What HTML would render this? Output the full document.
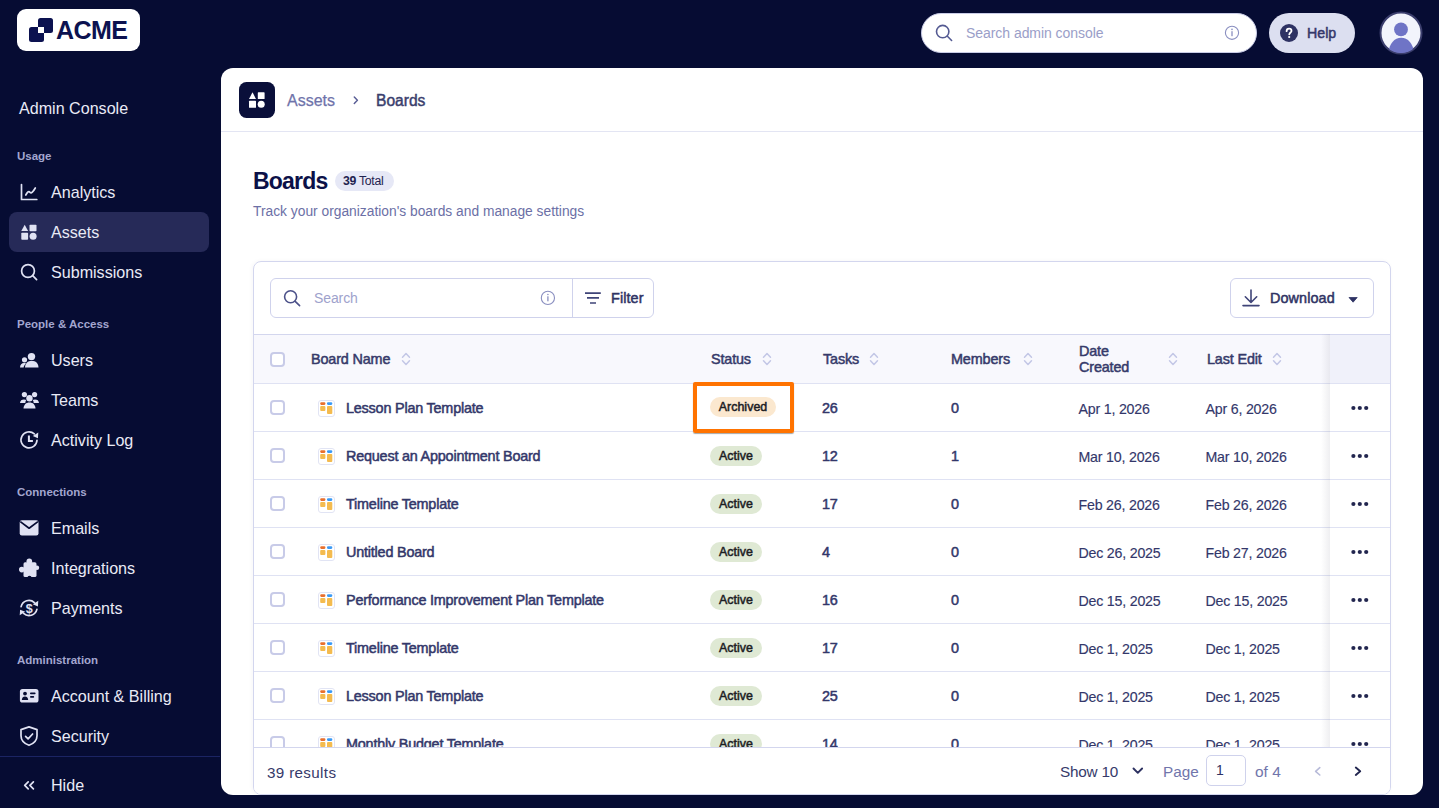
<!DOCTYPE html><html><head><meta charset="utf-8"><style>
*{box-sizing:border-box;margin:0;padding:0}
html,body{width:1439px;height:808px;overflow:hidden}
body{background:#060c33;font-family:"Liberation Sans",sans-serif;position:relative;color:#2d3161}
.abs{position:absolute;white-space:nowrap}
.sb{color:#e9eaf6;font-size:16.1px;line-height:20px}
.sec{color:#a3a6cf;font-size:11.5px;font-weight:bold;line-height:14px}
.card{left:221px;top:68px;width:1202px;height:727px;background:#fff;border-radius:12px;overflow:hidden}
.tcard{left:32px;top:193px;width:1138px;height:534px;border:1px solid #d3d6ee;border-radius:8px;overflow:hidden;box-shadow:-1px 0 4px rgba(20,20,60,0.04)}
.hd{font-size:14.4px;letter-spacing:-0.15px;line-height:20px;color:#363a6a;-webkit-text-stroke:0.5px #363a6a}
.nm{font-size:14.4px;letter-spacing:-0.2px;line-height:20px;color:#33376a;-webkit-text-stroke:0.5px #33376a}
.num{font-size:14.4px;letter-spacing:-0.2px;line-height:20px;color:#33376a;-webkit-text-stroke:0.5px #33376a}
.dt{font-size:14.2px;letter-spacing:-0.2px;line-height:20px;color:#33376a;-webkit-text-stroke:0.15px #33376a}
.badge{height:20px;border-radius:10px;font-size:12.4px;letter-spacing:0.05px;line-height:20px;text-align:center;color:#1d1d24;-webkit-text-stroke:0.5px #1d1d24}
.cb{width:15px;height:15px;border:2px solid #c8cbe8;border-radius:4px;background:#fff}
</style></head><body>
<div class="abs" style="left:17px;top:9px;width:123px;height:42px;background:#fff;border-radius:9px"></div>
<svg class="abs" style="left:29px;top:18px" width="25" height="25" viewBox="0 0 25 25"><rect x="9" y="0" width="15" height="15" rx="2.5" fill="#0c1250"/><rect x="0" y="9" width="15" height="15" rx="2.5" fill="#0c1250"/><rect x="9" y="9" width="6" height="6" fill="#fff"/></svg>
<div class="abs" style="left:56px;top:14px;font-size:25px;font-weight:bold;color:#0c1250;letter-spacing:-0.6px;line-height:32px">ACME</div>
<div class="abs sb" style="left:19px;top:98px">Admin Console</div>
<div class="abs" style="left:9px;top:212px;width:200px;height:40px;background:#262a58;border-radius:8px"></div>
<div class="abs sec" style="left:17px;top:149px">Usage</div>
<div class="abs sec" style="left:17px;top:317px">People &amp; Access</div>
<div class="abs sec" style="left:17px;top:485px">Connections</div>
<div class="abs sec" style="left:17px;top:653px">Administration</div>
<div class="abs sb" style="left:51px;top:182px">Analytics</div>
<div class="abs sb" style="left:51px;top:222px">Assets</div>
<div class="abs sb" style="left:51px;top:262px">Submissions</div>
<div class="abs sb" style="left:51px;top:350px">Users</div>
<div class="abs sb" style="left:51px;top:390px">Teams</div>
<div class="abs sb" style="left:51px;top:430px">Activity Log</div>
<div class="abs sb" style="left:51px;top:518px">Emails</div>
<div class="abs sb" style="left:51px;top:558px">Integrations</div>
<div class="abs sb" style="left:51px;top:598px">Payments</div>
<div class="abs sb" style="left:51px;top:686px">Account &amp; Billing</div>
<div class="abs sb" style="left:51px;top:726px">Security</div>
<div class="abs sb" style="left:51px;top:775px">Hide</div>
<div class="abs" style="left:0;top:756px;width:220px;height:1px;background:#1b2463"></div>
<svg class="abs" style="left:0;top:0" width="220" height="808" viewBox="0 0 220 808">
<g fill="none" stroke="#e0e2f3" stroke-width="1.7" stroke-linecap="round" stroke-linejoin="round">
<path d="M21.5 184.5 V199.5 H36.8"/>
<path d="M25.8 195 C27.3 192.2 28.6 190.8 30 192.3 C31.4 193.8 33 192 35.3 188"/>
<circle cx="28" cy="271" r="6.4"/><path d="M32.7 275.7 L36.6 279.6"/>
<path d="M37 440.3 A8 8 0 1 1 34.3 433.9"/>
<path d="M28.9 435.6 V441 H32.9" stroke-width="2" stroke-linecap="butt" stroke-linejoin="miter"/>
<path d="M29 726.9 L37 729.6 V735.8 C37 740.5 33.8 743.6 29 745.3 C24.2 743.6 21 740.5 21 735.8 V729.6 Z"/>
<path d="M25.6 736.3 L28.1 738.8 L32.6 734"/>
<path d="M28.2 781.8 L24.7 785.3 L28.2 788.8 M33.4 781.8 L29.9 785.3 L33.4 788.8"/>
<path d="M21.1 606.6 A8 8 0 0 1 34.4 602.6"/><path d="M36.9 609.4 A8 8 0 0 1 23.6 613.4"/>
</g>
<g fill="#e0e2f3">
<path d="M21.3 231 L24.7 224.7 L28.1 231 Z"/><rect x="29.5" y="224.7" width="7" height="6.5" rx="0.8"/>
<rect x="21.3" y="232.8" width="6.8" height="7" rx="0.8"/><circle cx="33.1" cy="236.3" r="3.5"/>
<circle cx="31.5" cy="356.6" r="3.7"/><path d="M25 367.5 C25.3 362.8 27.8 361 31.8 361 C35.8 361 38.2 362.8 38.5 367.5 Z"/>
<circle cx="24.5" cy="359.8" r="2.6"/><path d="M20 367.5 C20.2 364.6 21.6 363.2 24 363.1 C24.8 363.1 25.5 363.2 26 363.4 C24.6 364.6 23.8 366 23.6 367.5 Z"/>
<circle cx="24.4" cy="394.6" r="2.6"/><circle cx="34.6" cy="394.6" r="2.6"/><circle cx="29.5" cy="398.3" r="3.2"/>
<path d="M20 403 C20.3 400.6 21.6 399.5 24 399.5 C25 399.5 25.7 399.7 26.2 400.1 C25.6 401 25.3 402 25.3 403 Z"/>
<path d="M39 403 C38.7 400.6 37.4 399.5 35 399.5 C34 399.5 33.3 399.7 32.8 400.1 C33.4 401 33.7 402 33.7 403 Z"/>
<path d="M23.5 408.4 C23.8 404.5 26 402.4 29.5 402.4 C33 402.4 35.2 404.5 35.5 408.4 Z"/>
<rect x="19.7" y="520.3" width="18.8" height="15.2" rx="2.2"/>
<rect x="23.5" y="562.3" width="13" height="14.7" rx="1.6"/><circle cx="29.3" cy="561.2" r="2.8"/><circle cx="21.8" cy="569.6" r="2.8"/><circle cx="37" cy="567.8" r="2.2"/>
<rect x="19.9" y="689" width="18.6" height="13.6" rx="2.6"/>
<path d="M38.3 432.6 L32.8 436.1 L37.9 438.2 Z"/><path d="M38.3 600.8 L32.8 604.3 L37.9 606.4 Z"/><path d="M19.7 615.3 L25.2 611.8 L20.1 609.7 Z"/>
</g>
<path d="M20.3 521.6 L29.1 528.2 L37.9 521.6" fill="none" stroke="#060c33" stroke-width="1.7" stroke-linejoin="round"/>
<circle cx="29.5" cy="577.8" r="2.1" fill="#060c33"/>
<g fill="#060c33"><circle cx="25" cy="693.6" r="1.9"/><path d="M21.8 699.9 C22 697.5 23.2 696.4 25 696.4 C26.8 696.4 28 697.5 28.2 699.9 Z"/>
<rect x="30" y="692.6" width="5.6" height="1.7" rx="0.8"/><rect x="30" y="696.1" width="4.2" height="1.7" rx="0.8"/></g>
<text x="29.2" y="612.6" font-family="Liberation Sans" font-weight="bold" font-size="12.5" fill="#e0e2f3" text-anchor="middle">$</text>
</svg>
<div class="abs" style="left:921px;top:13px;width:336px;height:40px;border-radius:20px;background:#fff;border:1px solid #c9cce6"></div>
<svg class="abs" style="left:930px;top:20px" width="320" height="26" viewBox="930 20 320 26"><g fill="none" stroke="#545a92" stroke-width="1.6" stroke-linecap="round"><circle cx="942.7" cy="31.6" r="6.2"/><path d="M947.4 36.3 L951.6 40.5"/></g><g fill="none" stroke="#8a8fc0" stroke-width="1.1"><circle cx="1232" cy="32.8" r="6.6"/></g><rect x="1231.35" y="31.2" width="1.3" height="5" fill="#8a8fc0"/><circle cx="1232" cy="29.4" r="0.8" fill="#8a8fc0"/></svg>
<div class="abs" style="left:966px;top:23px;font-size:14px;line-height:20px;color:#9a9ec8;letter-spacing:-0.05px">Search admin console</div>
<div class="abs" style="left:1269px;top:13px;width:86px;height:40px;border-radius:20px;background:#dcdff0"></div>
<svg class="abs" style="left:1280px;top:24px" width="18" height="18" viewBox="0 0 18 18"><circle cx="9" cy="9" r="9" fill="#2e3263"/><path d="M6.6 7.2 C6.6 5.6 7.7 4.7 9.1 4.7 C10.5 4.7 11.5 5.6 11.5 6.9 C11.5 8.3 9.6 8.6 9.3 10.3" fill="none" stroke="#fff" stroke-width="1.8" stroke-linecap="round"/><circle cx="9.2" cy="13" r="1.1" fill="#fff"/></svg>
<div class="abs" style="left:1307px;top:23px;font-size:14.2px;line-height:20px;color:#34386a;-webkit-text-stroke:0.5px #34386a;letter-spacing:0px">Help</div>
<svg class="abs" style="left:1379px;top:11px" width="44" height="44" viewBox="0 0 44 44"><defs><clipPath id="av"><circle cx="22" cy="22" r="20"/></clipPath></defs><circle cx="22" cy="22" r="20.5" fill="#f2f4fc" stroke="#3b3e6d" stroke-width="2"/><g clip-path="url(#av)" fill="#6f74c6"><circle cx="22" cy="18.4" r="6.9"/><ellipse cx="22.2" cy="41" rx="12.3" ry="14.2"/></g></svg>
<div class="abs card">
<div class="abs" style="left:0;top:0;width:1202px;height:64px;border-bottom:1px solid #e3e5f3"></div>
<svg class="abs" style="left:18px;top:14px" width="36" height="36" viewBox="0 0 36 36"><rect width="36" height="36" rx="7.5" fill="#0a0f3a"/><g fill="#fff"><path d="M10 17 L13.5 10.3 L17 17 Z"/><rect x="18.8" y="10.3" width="6.8" height="6.7" rx="0.6"/><rect x="10" y="18.8" width="7" height="7" rx="0.6"/><circle cx="22.2" cy="22.3" r="3.5"/></g></svg>
<div class="abs" style="left:66px;top:23px;font-size:16px;line-height:20px;color:#6f73aa;letter-spacing:0px;-webkit-text-stroke:0.25px #6f73aa">Assets</div>
<svg class="abs" style="left:131px;top:26px" width="10" height="12" viewBox="0 0 10 12"><path d="M2.3 3 L5.4 6.2 L2.3 9.4" fill="none" stroke="#5b5f96" stroke-width="1.5" stroke-linecap="round" stroke-linejoin="round"/></svg>
<div class="abs" style="left:155px;top:23px;font-size:15.6px;line-height:20px;color:#3a3e6d;-webkit-text-stroke:0.45px #3a3e6d;letter-spacing:0px">Boards</div>
<div class="abs" style="left:32px;top:99px;font-size:23px;font-weight:bold;line-height:28px;color:#0c1148;letter-spacing:-0.8px">Boards</div>
<div class="abs" style="left:114px;top:103px;width:59px;height:20px;border-radius:10px;background:#e6e8f6"></div>
<div class="abs" style="left:122px;top:106px;font-size:12.3px;line-height:14px;color:#1f2350;letter-spacing:-0.3px"><b>39</b> Total</div>
<div class="abs" style="left:32px;top:135px;font-size:13.8px;line-height:18px;color:#6c70a6">Track your organization's boards and manage settings</div>
<div class="abs tcard">
<div class="abs" style="left:16px;top:16px;width:384px;height:40px;border:1px solid #cfd2ec;border-radius:6px"></div>
<div class="abs" style="left:318px;top:16px;width:1px;height:40px;background:#cfd2ec"></div>
<svg class="abs" style="left:26px;top:24px" width="290" height="24" viewBox="280 286 290 24"><g fill="none" stroke="#4c5189" stroke-width="1.6" stroke-linecap="round"><circle cx="290.6" cy="296.8" r="6"/><path d="M295.2 301.4 L299.6 305.6"/></g><circle cx="547.9" cy="297.9" r="6.6" fill="none" stroke="#8a8fc0" stroke-width="1.1"/><rect x="547.25" y="296.3" width="1.3" height="5" fill="#8a8fc0"/><circle cx="547.9" cy="294.5" r="0.8" fill="#8a8fc0"/></svg>
<div class="abs" style="left:60px;top:26px;font-size:14px;line-height:20px;color:#9ea2cc;letter-spacing:-0.1px">Search</div>
<svg class="abs" style="left:328px;top:28px" width="20" height="16" viewBox="582 290 20 16"><g stroke="#3f4478" stroke-width="1.6" stroke-linecap="butt"><path d="M585 293.1 H600.8 M587 297.9 H599 M590 303 H596"/></g></svg>
<div class="abs hd" style="left:357px;top:26px;color:#2f3364;-webkit-text-stroke:0.5px #2f3364;letter-spacing:0.1px">Filter</div>
<div class="abs" style="left:976px;top:16px;width:144px;height:40px;border:1px solid #cfd2ec;border-radius:6px"></div>
<svg class="abs" style="left:986px;top:26px" width="120" height="20" viewBox="1240 288 120 20"><g fill="none" stroke="#3f4478" stroke-width="1.6" stroke-linecap="round" stroke-linejoin="round"><path d="M1251 290 V302.3 M1245.3 296.8 L1251 302.5 L1256.7 296.8 M1243 305.6 H1259"/></g><path d="M1349 297.5 H1357.2 L1353.1 302.2 Z" fill="#2f3364" stroke="#2f3364" stroke-width="0.8" stroke-linejoin="round"/></svg>
<div class="abs hd" style="left:1016px;top:26px;color:#2f3364;-webkit-text-stroke:0.5px #2f3364;letter-spacing:0.1px">Download</div>
<div class="abs" style="left:0;top:72px;width:1137px;height:50px;background:#f8f8fd;border-top:1px solid #d3d6ee;border-bottom:1px solid #dfe2f3"></div>
<div class="abs hd" style="left:57px;top:87px">Board Name</div>
<svg class="abs" style="left:147px;top:90px" width="10" height="14" viewBox="0 0 10 14"><path d="M1.5 5.3 L5 1.5 L8.5 5.3 M1.5 8.7 L5 12.5 L8.5 8.7" fill="none" stroke="#c3c7e6" stroke-width="1.5" stroke-linecap="round" stroke-linejoin="round"/></svg>
<div class="abs hd" style="left:457px;top:87px">Status</div>
<svg class="abs" style="left:508px;top:90px" width="10" height="14" viewBox="0 0 10 14"><path d="M1.5 5.3 L5 1.5 L8.5 5.3 M1.5 8.7 L5 12.5 L8.5 8.7" fill="none" stroke="#c3c7e6" stroke-width="1.5" stroke-linecap="round" stroke-linejoin="round"/></svg>
<div class="abs hd" style="left:569px;top:87px">Tasks</div>
<svg class="abs" style="left:615px;top:90px" width="10" height="14" viewBox="0 0 10 14"><path d="M1.5 5.3 L5 1.5 L8.5 5.3 M1.5 8.7 L5 12.5 L8.5 8.7" fill="none" stroke="#c3c7e6" stroke-width="1.5" stroke-linecap="round" stroke-linejoin="round"/></svg>
<div class="abs hd" style="left:697px;top:87px">Members</div>
<svg class="abs" style="left:769px;top:90px" width="10" height="14" viewBox="0 0 10 14"><path d="M1.5 5.3 L5 1.5 L8.5 5.3 M1.5 8.7 L5 12.5 L8.5 8.7" fill="none" stroke="#c3c7e6" stroke-width="1.5" stroke-linecap="round" stroke-linejoin="round"/></svg>
<div class="abs hd" style="left:953px;top:87px">Last Edit</div>
<svg class="abs" style="left:1018px;top:90px" width="10" height="14" viewBox="0 0 10 14"><path d="M1.5 5.3 L5 1.5 L8.5 5.3 M1.5 8.7 L5 12.5 L8.5 8.7" fill="none" stroke="#c3c7e6" stroke-width="1.5" stroke-linecap="round" stroke-linejoin="round"/></svg>
<div class="abs hd" style="left:825px;top:81px;line-height:16px">Date<br>Created</div>
<svg class="abs" style="left:914px;top:90px" width="10" height="14" viewBox="0 0 10 14"><path d="M1.5 5.3 L5 1.5 L8.5 5.3 M1.5 8.7 L5 12.5 L8.5 8.7" fill="none" stroke="#c3c7e6" stroke-width="1.5" stroke-linecap="round" stroke-linejoin="round"/></svg>
<div class="abs cb" style="left:16px;top:90px"></div>
<div class="abs" style="left:0;top:122px;width:1137px;height:48px;border-bottom:1px solid #dfe2f3"></div>
<div class="abs cb" style="left:16px;top:138px"></div>
<svg class="abs" style="left:64px;top:137.5px" width="17" height="17" viewBox="0 0 17 17"><rect x="0.5" y="0.5" width="16" height="16" rx="2.5" fill="#fff" stroke="#e1e4f4"/><rect x="2.2" y="2.2" width="5.2" height="2.7" rx="1.1" fill="#e8702e"/><rect x="9" y="2.2" width="5.3" height="2.7" rx="1.1" fill="#3b9af5"/><rect x="2.2" y="6.1" width="5.2" height="5" rx="1" fill="#f4bb4f"/><rect x="9" y="6.1" width="5.3" height="8" rx="1" fill="#f4bb4f"/></svg>
<div class="abs nm" style="left:92px;top:136px">Lesson Plan Template</div>
<div class="abs badge" style="left:456px;top:135px;width:66px;background:#fbe8cf">Archived</div>
<div class="abs num" style="left:568px;top:136px">26</div>
<div class="abs num" style="left:697px;top:136px">0</div>
<div class="abs dt" style="left:824.5px;top:136.5px">Apr 1, 2026</div>
<div class="abs dt" style="left:951.5px;top:136.5px">Apr 6, 2026</div>
<div class="abs" style="left:0;top:170px;width:1137px;height:48px;border-bottom:1px solid #dfe2f3"></div>
<div class="abs cb" style="left:16px;top:186px"></div>
<svg class="abs" style="left:64px;top:185.5px" width="17" height="17" viewBox="0 0 17 17"><rect x="0.5" y="0.5" width="16" height="16" rx="2.5" fill="#fff" stroke="#e1e4f4"/><rect x="2.2" y="2.2" width="5.2" height="2.7" rx="1.1" fill="#e8702e"/><rect x="9" y="2.2" width="5.3" height="2.7" rx="1.1" fill="#3b9af5"/><rect x="2.2" y="6.1" width="5.2" height="5" rx="1" fill="#f4bb4f"/><rect x="9" y="6.1" width="5.3" height="8" rx="1" fill="#f4bb4f"/></svg>
<div class="abs nm" style="left:92px;top:184px">Request an Appointment Board</div>
<div class="abs badge" style="left:456px;top:184px;width:52px;background:#dfe9d4">Active</div>
<div class="abs num" style="left:568px;top:184px">12</div>
<div class="abs num" style="left:697px;top:184px">1</div>
<div class="abs dt" style="left:824.5px;top:184.5px">Mar 10, 2026</div>
<div class="abs dt" style="left:951.5px;top:184.5px">Mar 10, 2026</div>
<div class="abs" style="left:0;top:218px;width:1137px;height:48px;border-bottom:1px solid #dfe2f3"></div>
<div class="abs cb" style="left:16px;top:234px"></div>
<svg class="abs" style="left:64px;top:233.5px" width="17" height="17" viewBox="0 0 17 17"><rect x="0.5" y="0.5" width="16" height="16" rx="2.5" fill="#fff" stroke="#e1e4f4"/><rect x="2.2" y="2.2" width="5.2" height="2.7" rx="1.1" fill="#e8702e"/><rect x="9" y="2.2" width="5.3" height="2.7" rx="1.1" fill="#3b9af5"/><rect x="2.2" y="6.1" width="5.2" height="5" rx="1" fill="#f4bb4f"/><rect x="9" y="6.1" width="5.3" height="8" rx="1" fill="#f4bb4f"/></svg>
<div class="abs nm" style="left:92px;top:232px">Timeline Template</div>
<div class="abs badge" style="left:456px;top:232px;width:52px;background:#dfe9d4">Active</div>
<div class="abs num" style="left:568px;top:232px">17</div>
<div class="abs num" style="left:697px;top:232px">0</div>
<div class="abs dt" style="left:824.5px;top:232.5px">Feb 26, 2026</div>
<div class="abs dt" style="left:951.5px;top:232.5px">Feb 26, 2026</div>
<div class="abs" style="left:0;top:266px;width:1137px;height:48px;border-bottom:1px solid #dfe2f3"></div>
<div class="abs cb" style="left:16px;top:282px"></div>
<svg class="abs" style="left:64px;top:281.5px" width="17" height="17" viewBox="0 0 17 17"><rect x="0.5" y="0.5" width="16" height="16" rx="2.5" fill="#fff" stroke="#e1e4f4"/><rect x="2.2" y="2.2" width="5.2" height="2.7" rx="1.1" fill="#e8702e"/><rect x="9" y="2.2" width="5.3" height="2.7" rx="1.1" fill="#3b9af5"/><rect x="2.2" y="6.1" width="5.2" height="5" rx="1" fill="#f4bb4f"/><rect x="9" y="6.1" width="5.3" height="8" rx="1" fill="#f4bb4f"/></svg>
<div class="abs nm" style="left:92px;top:280px">Untitled Board</div>
<div class="abs badge" style="left:456px;top:280px;width:52px;background:#dfe9d4">Active</div>
<div class="abs num" style="left:568px;top:280px">4</div>
<div class="abs num" style="left:697px;top:280px">0</div>
<div class="abs dt" style="left:824.5px;top:280.5px">Dec 26, 2025</div>
<div class="abs dt" style="left:951.5px;top:280.5px">Feb 27, 2026</div>
<div class="abs" style="left:0;top:314px;width:1137px;height:48px;border-bottom:1px solid #dfe2f3"></div>
<div class="abs cb" style="left:16px;top:330px"></div>
<svg class="abs" style="left:64px;top:329.5px" width="17" height="17" viewBox="0 0 17 17"><rect x="0.5" y="0.5" width="16" height="16" rx="2.5" fill="#fff" stroke="#e1e4f4"/><rect x="2.2" y="2.2" width="5.2" height="2.7" rx="1.1" fill="#e8702e"/><rect x="9" y="2.2" width="5.3" height="2.7" rx="1.1" fill="#3b9af5"/><rect x="2.2" y="6.1" width="5.2" height="5" rx="1" fill="#f4bb4f"/><rect x="9" y="6.1" width="5.3" height="8" rx="1" fill="#f4bb4f"/></svg>
<div class="abs nm" style="left:92px;top:328px">Performance Improvement Plan Template</div>
<div class="abs badge" style="left:456px;top:328px;width:52px;background:#dfe9d4">Active</div>
<div class="abs num" style="left:568px;top:328px">16</div>
<div class="abs num" style="left:697px;top:328px">0</div>
<div class="abs dt" style="left:824.5px;top:328.5px">Dec 15, 2025</div>
<div class="abs dt" style="left:951.5px;top:328.5px">Dec 15, 2025</div>
<div class="abs" style="left:0;top:362px;width:1137px;height:48px;border-bottom:1px solid #dfe2f3"></div>
<div class="abs cb" style="left:16px;top:378px"></div>
<svg class="abs" style="left:64px;top:377.5px" width="17" height="17" viewBox="0 0 17 17"><rect x="0.5" y="0.5" width="16" height="16" rx="2.5" fill="#fff" stroke="#e1e4f4"/><rect x="2.2" y="2.2" width="5.2" height="2.7" rx="1.1" fill="#e8702e"/><rect x="9" y="2.2" width="5.3" height="2.7" rx="1.1" fill="#3b9af5"/><rect x="2.2" y="6.1" width="5.2" height="5" rx="1" fill="#f4bb4f"/><rect x="9" y="6.1" width="5.3" height="8" rx="1" fill="#f4bb4f"/></svg>
<div class="abs nm" style="left:92px;top:376px">Timeline Template</div>
<div class="abs badge" style="left:456px;top:376px;width:52px;background:#dfe9d4">Active</div>
<div class="abs num" style="left:568px;top:376px">17</div>
<div class="abs num" style="left:697px;top:376px">0</div>
<div class="abs dt" style="left:824.5px;top:376.5px">Dec 1, 2025</div>
<div class="abs dt" style="left:951.5px;top:376.5px">Dec 1, 2025</div>
<div class="abs" style="left:0;top:410px;width:1137px;height:48px;border-bottom:1px solid #dfe2f3"></div>
<div class="abs cb" style="left:16px;top:426px"></div>
<svg class="abs" style="left:64px;top:425.5px" width="17" height="17" viewBox="0 0 17 17"><rect x="0.5" y="0.5" width="16" height="16" rx="2.5" fill="#fff" stroke="#e1e4f4"/><rect x="2.2" y="2.2" width="5.2" height="2.7" rx="1.1" fill="#e8702e"/><rect x="9" y="2.2" width="5.3" height="2.7" rx="1.1" fill="#3b9af5"/><rect x="2.2" y="6.1" width="5.2" height="5" rx="1" fill="#f4bb4f"/><rect x="9" y="6.1" width="5.3" height="8" rx="1" fill="#f4bb4f"/></svg>
<div class="abs nm" style="left:92px;top:424px">Lesson Plan Template</div>
<div class="abs badge" style="left:456px;top:424px;width:52px;background:#dfe9d4">Active</div>
<div class="abs num" style="left:568px;top:424px">25</div>
<div class="abs num" style="left:697px;top:424px">0</div>
<div class="abs dt" style="left:824.5px;top:424.5px">Dec 1, 2025</div>
<div class="abs dt" style="left:951.5px;top:424.5px">Dec 1, 2025</div>
<div class="abs" style="left:0;top:458px;width:1137px;height:48px;border-bottom:1px solid #dfe2f3"></div>
<div class="abs cb" style="left:16px;top:474px"></div>
<svg class="abs" style="left:64px;top:473.5px" width="17" height="17" viewBox="0 0 17 17"><rect x="0.5" y="0.5" width="16" height="16" rx="2.5" fill="#fff" stroke="#e1e4f4"/><rect x="2.2" y="2.2" width="5.2" height="2.7" rx="1.1" fill="#e8702e"/><rect x="9" y="2.2" width="5.3" height="2.7" rx="1.1" fill="#3b9af5"/><rect x="2.2" y="6.1" width="5.2" height="5" rx="1" fill="#f4bb4f"/><rect x="9" y="6.1" width="5.3" height="8" rx="1" fill="#f4bb4f"/></svg>
<div class="abs nm" style="left:92px;top:472px">Monthly Budget Template</div>
<div class="abs badge" style="left:456px;top:472px;width:52px;background:#dfe9d4">Active</div>
<div class="abs num" style="left:568px;top:472px">14</div>
<div class="abs num" style="left:697px;top:472px">0</div>
<div class="abs dt" style="left:824.5px;top:472.5px">Dec 1, 2025</div>
<div class="abs dt" style="left:951.5px;top:472.5px">Dec 1, 2025</div>
<div class="abs" style="left:1067px;top:72px;width:9px;height:413px;background:linear-gradient(to right,rgba(30,30,60,0),rgba(30,30,60,0.07))"></div>
<div class="abs" style="left:1076px;top:72px;width:62px;height:50px;background:#f0f1fa;border-top:1px solid #d3d6ee;border-bottom:1px solid #dfe2f3"></div>
<svg class="abs" style="left:1096px;top:142px" width="20" height="8" viewBox="0 0 20 8"><g fill="#22264f"><circle cx="3.4" cy="4" r="2.1"/><circle cx="9.8" cy="4" r="2.1"/><circle cx="16.2" cy="4" r="2.1"/></g></svg>
<svg class="abs" style="left:1096px;top:190px" width="20" height="8" viewBox="0 0 20 8"><g fill="#22264f"><circle cx="3.4" cy="4" r="2.1"/><circle cx="9.8" cy="4" r="2.1"/><circle cx="16.2" cy="4" r="2.1"/></g></svg>
<svg class="abs" style="left:1096px;top:238px" width="20" height="8" viewBox="0 0 20 8"><g fill="#22264f"><circle cx="3.4" cy="4" r="2.1"/><circle cx="9.8" cy="4" r="2.1"/><circle cx="16.2" cy="4" r="2.1"/></g></svg>
<svg class="abs" style="left:1096px;top:286px" width="20" height="8" viewBox="0 0 20 8"><g fill="#22264f"><circle cx="3.4" cy="4" r="2.1"/><circle cx="9.8" cy="4" r="2.1"/><circle cx="16.2" cy="4" r="2.1"/></g></svg>
<svg class="abs" style="left:1096px;top:334px" width="20" height="8" viewBox="0 0 20 8"><g fill="#22264f"><circle cx="3.4" cy="4" r="2.1"/><circle cx="9.8" cy="4" r="2.1"/><circle cx="16.2" cy="4" r="2.1"/></g></svg>
<svg class="abs" style="left:1096px;top:382px" width="20" height="8" viewBox="0 0 20 8"><g fill="#22264f"><circle cx="3.4" cy="4" r="2.1"/><circle cx="9.8" cy="4" r="2.1"/><circle cx="16.2" cy="4" r="2.1"/></g></svg>
<svg class="abs" style="left:1096px;top:430px" width="20" height="8" viewBox="0 0 20 8"><g fill="#22264f"><circle cx="3.4" cy="4" r="2.1"/><circle cx="9.8" cy="4" r="2.1"/><circle cx="16.2" cy="4" r="2.1"/></g></svg>
<svg class="abs" style="left:1096px;top:478px" width="20" height="8" viewBox="0 0 20 8"><g fill="#22264f"><circle cx="3.4" cy="4" r="2.1"/><circle cx="9.8" cy="4" r="2.1"/><circle cx="16.2" cy="4" r="2.1"/></g></svg>
<div class="abs" style="left:439px;top:120px;width:101px;height:51px;border:4px solid #ff7300;border-radius:2px;box-shadow:0 1px 1px rgba(0,0,0,0.35)"></div>
<div class="abs" style="left:0;top:485px;width:1137px;height:60px;background:#fff;border-top:1px solid #d3d6ee"></div>
<div class="abs" style="left:13px;top:500.5px;font-size:15.2px;letter-spacing:0.35px;line-height:20px;color:#363a6a">39 results</div>
<div class="abs" style="left:806px;top:499.5px;font-size:15.3px;line-height:20px;color:#363a6a;letter-spacing:-0.2px">Show 10</div>
<div class="abs" style="left:909px;top:499.5px;font-size:15.3px;line-height:20px;color:#7175ab">Page</div>
<div class="abs" style="left:952px;top:493px;width:40px;height:31px;border:1px solid #cfd2ec;border-radius:5px;font-size:14px;line-height:29px;padding-left:9px;color:#2f3364">1</div>
<div class="abs" style="left:1001px;top:499.5px;font-size:15.5px;line-height:20px;color:#7175ab">of 4</div>
<svg class="abs" style="left:876px;top:501px" width="240" height="16" viewBox="1130 763 240 16"><path d="M1133.5 768.5 L1137.8 772.8 L1142.1 768.5" fill="none" stroke="#2d3161" stroke-width="1.9" stroke-linecap="round" stroke-linejoin="round"/><path d="M1319.8 767.6 L1315.6 771.3 L1319.8 775" fill="none" stroke="#b8bbd9" stroke-width="1.6" stroke-linecap="round" stroke-linejoin="round"/><path d="M1355.8 767.6 L1360.2 771.3 L1355.8 775" fill="none" stroke="#22264f" stroke-width="1.9" stroke-linecap="round" stroke-linejoin="round"/></svg>
</div>
</div>
</body></html>
